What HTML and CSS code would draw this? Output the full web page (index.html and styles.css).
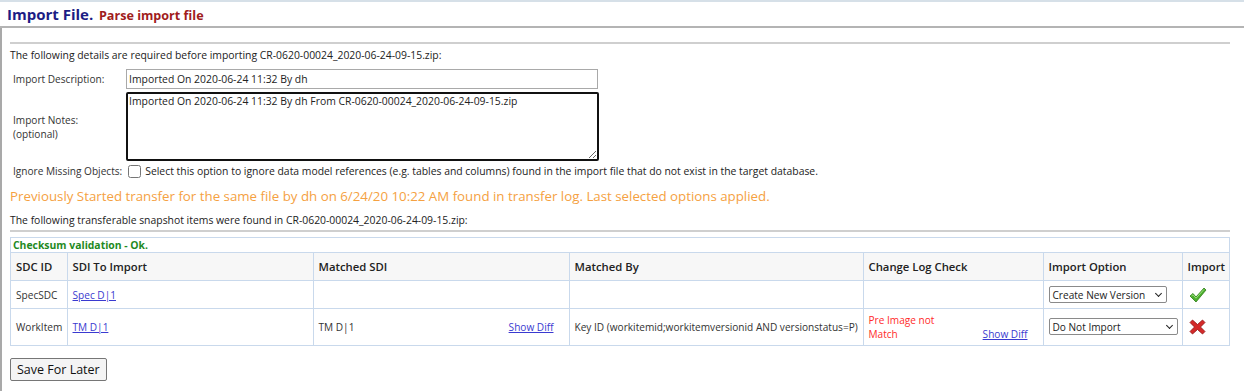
FILE: index.html
```html
<!DOCTYPE html>
<html lang="en">
<head>
    <meta charset="UTF-8">
    <title>Import File</title>
    <link rel="stylesheet" href="styles.css">
</head>
<body>
    <div class="page-title">
        <span class="title">Import File.</span>
        <span class="subtitle">Parse import file</span>
    </div>

    <div class="content">
        <hr class="sep">
        <p class="intro">The following details are required before importing CR-0620-00024_2020-06-24-09-15.zip:</p>

        <div class="form">
            <div class="form-row">
                <label class="lbl">Import Description:</label>
                <input class="txt" type="text" value="Imported On 2020-06-24 11:32 By dh">
            </div>
            <div class="form-row">
                <label class="lbl">Import Notes:<br>(optional)</label>
                <textarea class="notes">Imported On 2020-06-24 11:32 By dh From CR-0620-00024_2020-06-24-09-15.zip</textarea>
            </div>
            <div class="form-row check-row">
                <label class="lbl lbl-wide">Ignore Missing Objects:</label>
                <input class="chk" type="checkbox">
                <span>Select this option to ignore data model references (e.g. tables and columns) found in the import file that do not exist in the target database.</span>
            </div>
        </div>

        <p class="warning">Previously Started transfer for the same file by dh on 6/24/20 10:22 AM found in transfer log. Last selected options applied.</p>
        <p class="intro intro2">The following transferable snapshot items were found in CR-0620-00024_2020-06-24-09-15.zip:</p>
        <hr class="sep sep2">

        <div class="grid-box">
            <div class="checksum">Checksum validation - Ok.</div>
            <table class="items">
                <thead>
                    <tr>
                        <th class="c-sdc">SDC ID</th>
                        <th class="c-sdi">SDI To Import</th>
                        <th class="c-msdi">Matched SDI</th>
                        <th class="c-by">Matched By</th>
                        <th class="c-log">Change Log Check</th>
                        <th class="c-opt">Import Option</th>
                        <th class="c-imp">Import</th>
                    </tr>
                </thead>
                <tbody>
                    <tr class="r1">
                        <td>SpecSDC</td>
                        <td><a href="#">Spec D|1</a></td>
                        <td></td>
                        <td></td>
                        <td></td>
                        <td>
                            <div class="sel sel-short">Create New Version <span class="caret"></span></div>
                        </td>
                        <td>
                            <svg class="ico" width="18" height="16" viewBox="0 0 18 16">
                                <path d="M1 9 L4 6.5 L7 10 L15 1 L17 3 L7 15 Z" fill="#4caf2e" stroke="#2f7d18" stroke-width="0.8" stroke-linejoin="round"/>
                                <path d="M2.5 9 L4 7.8 L7 11.2 L15 2.4" fill="none" stroke="#9be07a" stroke-width="1"/>
                            </svg>
                        </td>
                    </tr>
                    <tr class="r2">
                        <td>WorkItem</td>
                        <td><a href="#">TM D|1</a></td>
                        <td>
                            <div class="split">
                                <span>TM D|1</span>
                                <a href="#">Show Diff</a>
                            </div>
                        </td>
                        <td>Key ID (workitemid;workitemversionid AND versionstatus=P)</td>
                        <td>
                            <div class="split split-low">
                                <span class="bad">Pre Image not<br>Match</span>
                                <a href="#">Show Diff</a>
                            </div>
                        </td>
                        <td>
                            <div class="sel sel-long">Do Not Import <span class="caret"></span></div>
                        </td>
                        <td>
                            <svg class="ico" width="17" height="16" viewBox="0 0 17 16">
                                <path d="M1 3.5 L3.5 1 L8.5 5.5 L13.5 1 L16 3.5 L11.5 8 L16 12.5 L13.5 15 L8.5 10.5 L3.5 15 L1 12.5 L5.5 8 Z" fill="#d42a2a" stroke="#8e1212" stroke-width="0.8" stroke-linejoin="round"/>
                            </svg>
                        </td>
                    </tr>
                </tbody>
            </table>
        </div>

        <button class="btn" type="button">Save For Later</button>
    </div>
</body>
</html>
```

FILE: styles.css
```css
* {
    box-sizing: border-box;
}

body {
    margin: 0;
    font-family: "Open Sans", "Liberation Sans", sans-serif;
    font-size: 10.4px;
    color: #333;
    background: #fff;
    border-top: 2px solid #d6e0e8;
}

.page-title {
    height: 26px;
    padding: 2px 0 0 7px;
    border-bottom: 2px solid #b4b4b4;
    white-space: nowrap;
}

.title {
    font-size: 15px;
    font-weight: 700;
    color: #1c1c84;
}

.subtitle {
    font-size: 12.6px;
    font-weight: 700;
    color: #a01c1c;
    margin-left: 3px;
}

.content {
    border-left: 2px solid #a9a9a9;
    padding: 14px 12px 10px 8px;
    min-height: 363px;
}

.sep {
    border: none;
    border-top: 2px solid #cfcfcf;
    margin: 0 2px 0 0;
}

.sep2 {
    margin-top: 2px;
}

.intro {
    margin: 4px 0 0;
    line-height: 15px;
    color: #222;
}

.intro2 {
    margin-top: 7px;
}

.form {
    margin-top: 6px;
}

.form-row {
    display: flex;
    align-items: center;
    margin-top: 3px;
}

.lbl {
    width: 116px;
    padding-left: 3px;
    color: #333;
    font-size: 10.1px;
    line-height: 14px;
}

.lbl-wide {
    width: auto;
    margin-right: 6px;
}

.txt {
    width: 472px;
    height: 20px;
    border: 1px solid #a9a9a9;
    font-family: inherit;
    font-size: 10.4px;
    color: #222;
    padding: 1px 2px;
}

.notes {
    width: 473px;
    height: 69px;
    border: 2px solid #111;
    border-radius: 2px;
    font-family: inherit;
    font-size: 10.4px;
    color: #222;
    padding: 0 1px;
    resize: vertical;
    line-height: 15px;
}

.check-row {
    margin-top: 3px;
    color: #222;
}

.chk {
    width: 13px;
    height: 13px;
    margin: 0 4px 0 0;
}

.warning {
    margin: 8px 0 0;
    font-size: 13.3px;
    line-height: 20px;
    color: #f5a142;
}

.grid-box {
    margin-top: 5px;
    border: 1px solid #c9d9ec;
    margin-right: 2px;
}

.checksum {
    color: #1f8a1f;
    font-weight: 700;
    padding: 1px 2px 0;
    line-height: 13px;
}

.items {
    width: 100%;
    border-collapse: collapse;
    table-layout: fixed;
}

.items th,
.items td {
    border: 1px solid #c9d9ec;
    padding: 0 5px;
    text-align: left;
    vertical-align: middle;
    white-space: nowrap;
}

.items td {
    font-size: 10.1px;
}

.items tr > :first-child {
    border-left: none;
}

.items tr > :last-child {
    border-right: none;
}

.items tbody tr:last-child td {
    border-bottom: none;
}

.items th {
    background: #f7f7f7;
    height: 28px;
    font-size: 11.3px;
    font-weight: 600;
    color: #222;
}

.r1 td {
    height: 28px;
}

.r2 td {
    height: 36px;
}

.c-sdc { width: 56px; }
.c-sdi { width: 246px; }
.c-msdi { width: 256px; }
.c-by { width: 294px; }
.c-log { width: 180px; }
.c-opt { width: 139px; }

.items a {
    color: #3a3ad0;
}

.split {
    display: flex;
    justify-content: space-between;
    align-items: center;
    margin-right: 10px;
}

.split-low {
    align-items: flex-end;
    line-height: 14px;
}

.bad {
    color: #ff2b2b;
}

.sel {
    display: inline-flex;
    align-items: center;
    justify-content: space-between;
    height: 17px;
    border: 1px solid #8a8a8a;
    border-radius: 2px;
    padding: 0 5px 0 3px;
    color: #222;
    background: #fff;
}

.sel-short { width: 118px; }
.sel-long { width: 129px; }

.caret {
    width: 5px;
    height: 5px;
    border-right: 1.5px solid #222;
    border-bottom: 1.5px solid #222;
    transform: rotate(45deg);
    margin-top: -3px;
}

.ico {
    display: block;
    margin-left: 1px;
}

.btn {
    margin-top: 12px;
    font-family: inherit;
    font-size: 12.5px;
    color: #111;
    background: #f4f4f4;
    border: 1px solid #767676;
    border-radius: 2px;
    padding: 1px 6px;
    height: 23px;
}
```
